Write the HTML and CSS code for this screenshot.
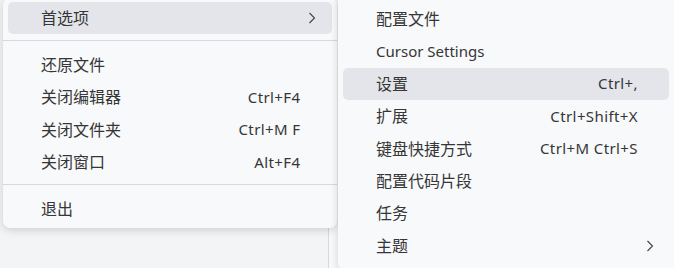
FILE: index.html
```html
<!DOCTYPE html>
<html lang="zh-CN">

<head>
	<meta charset="UTF-8">
	<meta name="viewport" content="width=device-width, initial-scale=1.0">
	<title>首选项</title>
	<link rel="stylesheet" href="styles.css">
</head>

<body>
	<div class="workbench">
		<div class="side"></div>
		<div class="editor"></div>
	</div>

	<!-- 文件菜单 -->
	<div class="menu menu-main">
		<div class="item active">
			<span class="label">首选项</span>
			<svg class="chevron" viewBox="0 0 8 12"><path d="M1.5 1 L6.5 6 L1.5 11" /></svg>
		</div>
		<div class="sep"></div>
		<div class="item"><span class="label">还原文件</span></div>
		<div class="item"><span class="label">关闭编辑器</span><span class="key">Ctrl+F4</span></div>
		<div class="item"><span class="label">关闭文件夹</span><span class="key">Ctrl+M F</span></div>
		<div class="item"><span class="label">关闭窗口</span><span class="key">Alt+F4</span></div>
		<div class="sep"></div>
		<div class="item"><span class="label">退出</span></div>
	</div>

	<!-- 首选项子菜单 -->
	<div class="menu menu-sub">
		<div class="item"><span class="label">配置文件</span></div>
		<div class="item"><span class="label en">Cursor Settings</span></div>
		<div class="item active"><span class="label">设置</span><span class="key">Ctrl+,</span></div>
		<div class="item"><span class="label">扩展</span><span class="key">Ctrl+Shift+X</span></div>
		<div class="item"><span class="label">键盘快捷方式</span><span class="key">Ctrl+M Ctrl+S</span></div>
		<div class="item"><span class="label">配置代码片段</span></div>
		<div class="item"><span class="label">任务</span></div>
		<div class="item">
			<span class="label">主题</span>
			<svg class="chevron" viewBox="0 0 8 12"><path d="M1.5 1 L6.5 6 L1.5 11" /></svg>
		</div>
	</div>
</body>

</html>
```

FILE: styles.css
```css
body {
	margin: 0;
	width: 674px;
	height: 268px;
	overflow: hidden;
	background: #f3f4f6;
	font-family: "Noto Sans", "Noto Sans CJK SC", sans-serif;
	font-size: 15px;
	color: #363636;
}

.workbench {
	display: flex;
	height: 100%;
}

.side {
	width: 328px;
	border-right: 1px solid #d5d9df;
}

.editor {
	flex: 1;
	background: #f8f9fb;
}

.menu {
	position: absolute;
	background: #f8f9fb;
	border-radius: 7px;
	box-shadow: 0 2px 8px rgba(0, 0, 0, 0.16);
	padding: 4px 5px;
	box-sizing: border-box;
}

.menu-main {
	left: 3px;
	top: -2px;
	width: 334px;
	padding-bottom: 3px;
}

.menu-sub {
	left: 338px;
	top: -2px;
	width: 336px;
	height: 272px;
	padding-top: 4.8px;
	border-radius: 0 0 0 7px;
}

.item {
	display: flex;
	align-items: center;
	height: 32.4px;
	padding: 0 31.5px 0 33px;
	border-radius: 5px;
	line-height: 1;
	white-space: nowrap;
}

.menu-sub .item {
	padding-right: 31px;
}

.item.active {
	background: #e3e5ea;
}

.label {
	flex: 1;
	font-size: 16px;
}

.label.en {
	font-size: 15px;
}

.key {
	letter-spacing: 0.4px;
}

.chevron {
	width: 8px;
	height: 12px;
	margin-right: -15.5px;
	fill: none;
	stroke: #444;
	stroke-width: 1.1;
}

.menu-sub .chevron {
	margin-right: -16px;
}

.sep {
	height: 1px;
	margin: 6px -5px 7.5px;
	background: #d6d8dc;
}
```
